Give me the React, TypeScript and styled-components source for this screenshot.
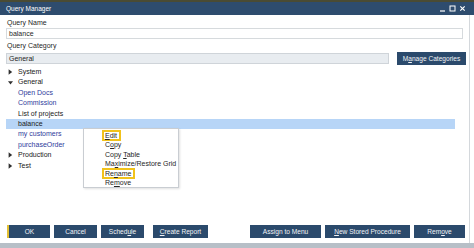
import React from "react";
import styled, { createGlobalStyle } from "styled-components";

const GlobalStyle = createGlobalStyle`
  html, body {
    margin: 0;
    padding: 0;
    background: #ffffff;
  }
  body {
    font-family: "Liberation Sans", Arial, sans-serif;
    font-size: 7px;
    color: #1f1f1f;
  }
`;

const Window = styled.div`
  position: relative;
  width: 474px;
  height: 248px;
  display: flex;
  flex-direction: column;
  overflow: hidden;
  background: #ffffff;
`;

const TopStrip = styled.div`
  height: 2px;
  background: #4a4b34;
`;

const TitleBar = styled.div`
  height: 13px;
  background: #2e4c6e;
  color: #ffffff;
  display: flex;
  align-items: center;
  justify-content: space-between;
  padding: 0 8px 0 6px;
  font-size: 6.5px;
`;

const WindowControls = styled.div`
  display: flex;
  align-items: center;
  gap: 3px;
`;

const Body = styled.div`
  flex: 1;
  display: flex;
  flex-direction: column;
  width: 470px;
  border-right: 1px solid #d4d8dc;
  padding: 2px 0 0 6px;
  box-sizing: border-box;
`;

const FieldLabel = styled.div`
  height: 11px;
  line-height: 11px;
  padding-left: 1px;
  font-size: 7px;
`;

const TextField = styled.div<{ $filled?: boolean }>`
  height: 11px;
  line-height: 9px;
  box-sizing: border-box;
  border: 1px solid ${(p) => (p.$filled ? "#cfd4d9" : "#d6dadd")};
  background: ${(p) => (p.$filled ? "#e8ecf0" : "#ffffff")};
  padding-left: 2px;
  font-size: 7px;
`;

const NameField = styled(TextField)`
  width: 457px;
  margin-bottom: 1px;
`;

const CategoryRow = styled.div`
  display: flex;
  align-items: center;
  gap: 8px;
  height: 14px;
`;

const CategoryField = styled(TextField)`
  width: 383px;
`;

const Button = styled.div<{ $w: number; $focused?: boolean }>`
  width: ${(p) => p.$w}px;
  height: 13px;
  box-sizing: border-box;
  background: #2b4a6c;
  color: #f2f4f7;
  font-size: 6.6px;
  display: flex;
  align-items: center;
  justify-content: center;
  border-left: ${(p) => (p.$focused ? "2px solid #e3c034" : "none")};
  white-space: nowrap;
`;

const Tree = styled.div`
  position: relative;
  flex: 1;
  margin-top: 2px;
  width: 449px;
`;

const TreeRow = styled.div<{ $selected?: boolean; $link?: boolean }>`
  height: 10.4px;
  line-height: 10.4px;
  display: flex;
  align-items: center;
  padding-left: 1px;
  background: ${(p) => (p.$selected ? "#b7d5f7" : "transparent")};
  color: ${(p) => (p.$link ? "#2f3c9c" : "#202020")};
  font-size: 7px;
`;

const Twisty = styled.span`
  width: 11px;
  display: inline-flex;
  align-items: center;
  justify-content: flex-start;
  padding-left: 1px;
  box-sizing: border-box;
`;

const ChildIndent = styled.span`
  width: 11px;
  display: inline-block;
`;

const ContextMenu = styled.div`
  position: absolute;
  left: 77px;
  top: 61px;
  width: 96px;
  height: 60px;
  box-sizing: border-box;
  background: #ffffff;
  border: 1px solid #c9cdd2;
  box-shadow: 1px 1px 2px rgba(0, 0, 0, 0.12);
  padding: 1.5px 0 0 20px;
`;

const MenuItem = styled.div`
  height: 9.6px;
  line-height: 9.6px;
  font-size: 7px;
  color: #262626;
  white-space: nowrap;
`;

const MenuText = styled.span<{ $marked?: boolean }>`
  padding: 0 2px 0 1px;
  box-shadow: ${(p) => (p.$marked ? "0 0 0 2px #f1c21b" : "none")};
`;

const Footer = styled.div`
  display: flex;
  align-items: center;
  height: 13px;
  margin-bottom: 5px;
  padding-left: 1px;
  padding-right: 4px;
`;

const ButtonGroup = styled.div<{ $gap: number; $offset?: number }>`
  display: flex;
  gap: ${(p) => p.$gap}px;
  margin-left: ${(p) => p.$offset ?? 0}px;
`;

const Spacer = styled.div`
  flex: 1;
`;

const BottomBand = styled.div`
  height: 5px;
  background: #b7bfc7;
`;

const U = styled.span`
  text-decoration: underline;
  text-underline-offset: 1px;
`;

const Triangle = ({ open }: { open?: boolean }) => (
  <svg width="5" height="6" viewBox="0 0 5 6">
    {open ? (
      <path d="M0 1.2 L5 1.2 L2.5 4.6 Z" fill="#303030" />
    ) : (
      <path d="M0.6 0.3 L4.2 3 L0.6 5.7 Z" fill="#303030" />
    )}
  </svg>
);

const Controls = () => (
  <WindowControls>
    <svg width="7" height="7" viewBox="0 0 7 7">
      <path d="M1 6 H6" stroke="#ffffff" strokeWidth="1.2" />
    </svg>
    <svg width="7" height="7" viewBox="0 0 7 7">
      <rect x="1" y="1" width="5" height="5" fill="none" stroke="#ffffff" strokeWidth="1" />
    </svg>
    <svg width="7" height="7" viewBox="0 0 7 7">
      <path d="M1.3 1.3 L5.7 5.7 M5.7 1.3 L1.3 5.7" stroke="#ffffff" strokeWidth="1.2" />
    </svg>
  </WindowControls>
);

const rows: { label: string; kind: "cat" | "child"; open?: boolean; link?: boolean; selected?: boolean }[] = [
  { label: "System", kind: "cat" },
  { label: "General", kind: "cat", open: true },
  { label: "Open Docs", kind: "child", link: true },
  { label: "Commission", kind: "child", link: true },
  { label: "List of projects", kind: "child" },
  { label: "balance", kind: "child", selected: true },
  { label: "my customers", kind: "child", link: true },
  { label: "purchaseOrder", kind: "child", link: true },
  { label: "Production", kind: "cat" },
  { label: "Test", kind: "cat" },
];

export default function App() {
  return (
    <>
      <GlobalStyle />
      <Window>
        <TopStrip />
        <TitleBar>
          <span>Query Manager</span>
          <Controls />
        </TitleBar>
        <Body>
          <FieldLabel>Query Name</FieldLabel>
          <NameField>balance</NameField>
          <FieldLabel>Query Category</FieldLabel>
          <CategoryRow>
            <CategoryField $filled>General</CategoryField>
            <Button $w={69}>
              M<U>a</U>nage Categories
            </Button>
          </CategoryRow>
          <Tree>
            {rows.map((r) => (
              <TreeRow key={r.label} $selected={r.selected} $link={r.link}>
                {r.kind === "cat" ? (
                  <Twisty>
                    <Triangle open={r.open} />
                  </Twisty>
                ) : (
                  <ChildIndent />
                )}
                {r.label}
              </TreeRow>
            ))}
            <ContextMenu>
              <MenuItem>
                <MenuText $marked>
                  <U>E</U>dit
                </MenuText>
              </MenuItem>
              <MenuItem>
                <MenuText>
                  C<U>o</U>py
                </MenuText>
              </MenuItem>
              <MenuItem>
                <MenuText>
                  Copy <U>T</U>able
                </MenuText>
              </MenuItem>
              <MenuItem>
                <MenuText>
                  Ma<U>x</U>imize/Restore Grid
                </MenuText>
              </MenuItem>
              <MenuItem>
                <MenuText $marked>
                  Re<U>n</U>ame
                </MenuText>
              </MenuItem>
              <MenuItem>
                <MenuText>
                  Re<U>m</U>ove
                </MenuText>
              </MenuItem>
            </ContextMenu>
          </Tree>
          <Footer>
            <ButtonGroup $gap={4}>
              <Button $w={43} $focused>
                OK
              </Button>
              <Button $w={43}>Cancel</Button>
              <Button $w={43}>
                Sched<U>u</U>le
              </Button>
            </ButtonGroup>
            <ButtonGroup $gap={0} $offset={9}>
              <Button $w={55}>
                <U>C</U>reate Report
              </Button>
            </ButtonGroup>
            <Spacer />
            <ButtonGroup $gap={4}>
              <Button $w={71}>Assign to Menu</Button>
              <Button $w={85}>
                <U>N</U>ew Stored Procedure
              </Button>
              <Button $w={51}>
                Rem<U>o</U>ve
              </Button>
            </ButtonGroup>
          </Footer>
        </Body>
        <BottomBand />
      </Window>
    </>
  );
}
